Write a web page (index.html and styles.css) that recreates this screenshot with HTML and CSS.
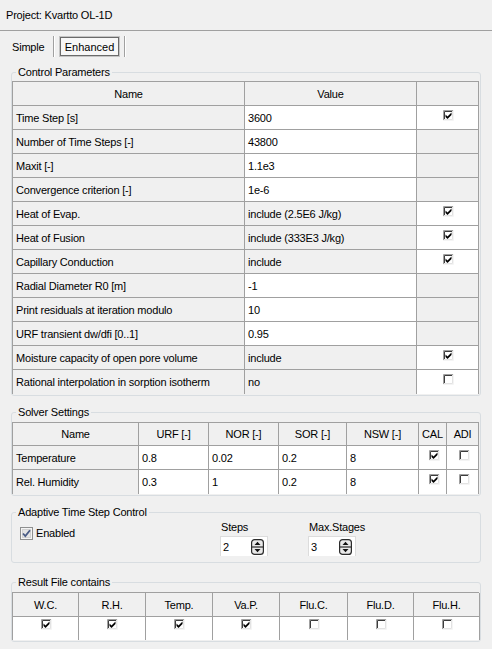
FILE: index.html
```html
<!DOCTYPE html>
<html>
<head>
<meta charset="utf-8">
<link rel="stylesheet" href="styles.css">
</head>
<body>
<svg class="defs" width="0" height="0">
  <symbol id="cb-off" viewBox="0 0 11 11">
    <rect width="11" height="11" fill="#fff"/>
    <path d="M0.5 10.5V0.5H10.5" fill="none" stroke="#a0a0a0"/>
    <path d="M1.5 9.5V1.5H9.5" fill="none" stroke="#3c3c3c"/>
    <path d="M10.5 0V10.5H0" fill="none" stroke="#f4f4f4"/>
    <path d="M9.5 1V9.5H1" fill="none" stroke="#e3e3e3"/>
  </symbol>
  <symbol id="cb-on" viewBox="0 0 11 11">
    <use href="#cb-off"/>
    <path d="M2.5 4.5L4.5 6.5L8.5 2.5V5L4.5 9L2.5 7Z" fill="#000"/>
  </symbol>
  <symbol id="cb-en" viewBox="0 0 13 13">
    <rect x="0.5" y="0.5" width="12" height="12" fill="#f4f4f4" stroke="#8e8f8f"/>
    <rect x="2.5" y="2.5" width="8" height="8" fill="#e4e4e4" stroke="#d2d2d2"/>
    <path d="M3 6.5L5.3 9L10 3.2" fill="none" stroke="#4a5c86" stroke-width="1.8"/>
  </symbol>
  <symbol id="spin" viewBox="0 0 13 16">
    <rect x="0.6" y="0.6" width="11.8" height="14.8" rx="3" fill="#e9e9e9" stroke="#2b2b2b" stroke-width="1.2"/>
    <path d="M1 8H12" stroke="#2b2b2b" stroke-width="1.2"/>
    <path d="M3.5 6H9.5L6.5 2.8Z" fill="#111"/>
    <path d="M3.5 10H9.5L6.5 13.2Z" fill="#111"/>
  </symbol>
</svg>

<div class="title">Project: Kvartto OL-1D</div>

<div class="tabs">
  <span class="tab tab-simple">Simple</span>
  <span class="tab-sep"></span>
  <span class="tab tab-active">Enhanced</span>
  <span class="tab-sep"></span>
</div>

<fieldset class="group g-control">
  <legend>Control Parameters</legend>
  <div class="grid control">
    <div class="c hd">Name</div><div class="c hd">Value</div><div class="c hd"></div>

    <div class="c">Time Step [s]</div><div class="c w">3600</div><div class="c w ck"><svg class="cb"><use href="#cb-on"/></svg></div>
    <div class="c">Number of Time Steps [-]</div><div class="c w">43800</div><div class="c"></div>
    <div class="c">Maxit [-]</div><div class="c w">1.1e3</div><div class="c"></div>
    <div class="c">Convergence criterion [-]</div><div class="c w">1e-6</div><div class="c"></div>
    <div class="c">Heat of Evap.</div><div class="c">include (2.5E6 J/kg)</div><div class="c w ck"><svg class="cb"><use href="#cb-on"/></svg></div>
    <div class="c">Heat of Fusion</div><div class="c">include (333E3 J/kg)</div><div class="c w ck"><svg class="cb"><use href="#cb-on"/></svg></div>
    <div class="c">Capillary Conduction</div><div class="c">include</div><div class="c w ck"><svg class="cb"><use href="#cb-on"/></svg></div>
    <div class="c">Radial Diameter R0 [m]</div><div class="c w">-1</div><div class="c"></div>
    <div class="c">Print residuals at iteration modulo</div><div class="c w">10</div><div class="c"></div>
    <div class="c">URF transient dw/dfi [0..1]</div><div class="c w">0.95</div><div class="c"></div>
    <div class="c">Moisture capacity of open pore volume</div><div class="c">include</div><div class="c w ck"><svg class="cb"><use href="#cb-on"/></svg></div>
    <div class="c e">Rational interpolation in sorption isotherm</div><div class="c e">no</div><div class="c w ck e"><svg class="cb"><use href="#cb-off"/></svg></div>
  </div>
</fieldset>

<fieldset class="group g-solver">
  <legend>Solver Settings</legend>
  <div class="grid solver">
    <div class="c hd">Name</div><div class="c hd">URF [-]</div><div class="c hd">NOR [-]</div><div class="c hd">SOR [-]</div><div class="c hd">NSW [-]</div><div class="c hd">CAL</div><div class="c hd">ADI</div>

    <div class="c">Temperature</div><div class="c w">0.8</div><div class="c w">0.02</div><div class="c w">0.2</div><div class="c w">8</div>
    <div class="c w ck sck"><svg class="cb"><use href="#cb-on"/></svg></div><div class="c w ck sck"><svg class="cb"><use href="#cb-off"/></svg></div>

    <div class="c e">Rel. Humidity</div><div class="c w e">0.3</div><div class="c w e">1</div><div class="c w e">0.2</div><div class="c w e">8</div>
    <div class="c w ck sck e"><svg class="cb"><use href="#cb-on"/></svg></div><div class="c w ck sck e"><svg class="cb"><use href="#cb-off"/></svg></div>
  </div>
</fieldset>

<fieldset class="group g-adapt">
  <legend>Adaptive Time Step Control</legend>
  <div class="adapt">
    <div class="enabled">
      <svg class="cb-en"><use href="#cb-en"/></svg>
      <span>Enabled</span>
    </div>
    <div class="spin-col">
      <span class="spin-label">Steps</span>
      <div class="spin"><span>2</span><svg class="spin-btn"><use href="#spin"/></svg></div>
    </div>
    <div class="spin-col">
      <span class="spin-label">Max.Stages</span>
      <div class="spin"><span>3</span><svg class="spin-btn"><use href="#spin"/></svg></div>
    </div>
  </div>
</fieldset>

<fieldset class="group g-result">
  <legend>Result File contains</legend>
  <div class="grid result">
    <div class="c hd">W.C.</div><div class="c hd">R.H.</div><div class="c hd">Temp.</div><div class="c hd">Va.P.</div><div class="c hd">Flu.C.</div><div class="c hd">Flu.D.</div><div class="c hd">Flu.H.</div>

    <div class="c w ck rck e"><svg class="cb"><use href="#cb-on"/></svg></div>
    <div class="c w ck rck e"><svg class="cb"><use href="#cb-on"/></svg></div>
    <div class="c w ck rck e"><svg class="cb"><use href="#cb-on"/></svg></div>
    <div class="c w ck rck e"><svg class="cb"><use href="#cb-on"/></svg></div>
    <div class="c w ck rck e"><svg class="cb"><use href="#cb-off"/></svg></div>
    <div class="c w ck rck e"><svg class="cb"><use href="#cb-off"/></svg></div>
    <div class="c w ck rck e"><svg class="cb"><use href="#cb-off"/></svg></div>
  </div>
</fieldset>
</body>
</html>
```

FILE: styles.css
```css
* {
  box-sizing: border-box;
}

html, body {
  margin: 0;
  background: #f0f0f0;
}

body {
  width: 492px;
  height: 649px;
  overflow: hidden;
  font-family: "Liberation Sans", Arial, sans-serif;
  font-size: 11px;
  letter-spacing: -0.2px;
  color: #000;
}

.defs {
  display: block;
  overflow: hidden;
}

.title {
  height: 31px;
  line-height: 30px;
  padding-left: 6px;
  border-bottom: 1px solid #a0a0a0;
}

.tabs {
  display: flex;
  height: 21px;
  margin-top: 5px;
}

.tab {
  display: flex;
  align-items: center;
}

.tab-simple {
  margin-left: 12px;
  width: 41px;
}

.tab-sep {
  width: 2px;
  border-left: 1px solid #a0a0a0;
  border-right: 1px solid #fff;
}

.tab-active {
  margin: 0 4px;
  width: 61px;
  justify-content: center;
  border: 1px solid #c4c4c4;
  box-shadow: inset 0 0 0 1px #6a6a6a;
  background: #f7f7f7;
  letter-spacing: 0;
}

.group {
  margin: 10px 11px 0;
  padding: 3px 1px 1px 0;
  border: 1px solid #d8dde1;
  border-radius: 3px;
  min-width: 0;
}

.group legend {
  padding: 0 2px;
  margin-left: 4px;
  line-height: 12px;
}

.g-control {
  margin-top: 9px;
}

.g-solver {
  padding-top: 4px;
}

.g-adapt {
  padding: 3px 0 6px 0;
}

.g-result {
  margin-top: 13px;
  padding-top: 4px;
}

.grid {
  display: grid;
  border-top: 1px solid #a0a0a0;
  border-left: 1px solid #a0a0a0;
}

.control {
  grid-template-columns: 232px 172px 62px;
  grid-auto-rows: 24px;
}

.solver {
  grid-template-columns: 126px 70px 70px 68px 72px 28px 32px;
  grid-template-rows: 23px 24px 24px;
}

.result {
  grid-template-columns: 66px 67px 67px 67px 68px 66px 66px;
  grid-template-rows: 24px 23px;
}

.c {
  display: flex;
  align-items: center;
  padding: 0 3px;
  border-right: 1px solid #a0a0a0;
  border-bottom: 1px solid #a0a0a0;
  background: #f0f0f0;
  white-space: nowrap;
  overflow: hidden;
}

.c.w {
  background: #fff;
}

.c.e {
  border-bottom: 0;
}

.hd {
  justify-content: center;
}

.ck {
  justify-content: center;
  align-items: flex-start;
  padding: 4px 0 0 1px;
}

.sck {
  padding-left: 4px;
}

.rck {
  padding-top: 2px;
}

.cb {
  width: 11px;
  height: 11px;
  display: block;
}

.adapt {
  display: flex;
  padding-left: 8px;
}

.enabled {
  width: 200px;
  padding-top: 6px;
  display: flex;
  align-items: flex-start;
  gap: 3px;
}

.enabled span {
  line-height: 13px;
}

.cb-en {
  width: 13px;
  height: 13px;
  display: block;
}

.spin-col {
  width: 88px;
  display: flex;
  flex-direction: column;
  gap: 3px;
}

.spin-label {
  line-height: 12px;
  padding-left: 1px;
}

.spin {
  width: 48px;
  height: 20px;
  display: flex;
  align-items: center;
  justify-content: space-between;
  padding: 0 3px 0 2px;
  background: #fff;
  border: 1px solid #dcdcdc;
  border-bottom: 0;
}

.spin-btn {
  width: 13px;
  height: 16px;
  display: block;
}
```
